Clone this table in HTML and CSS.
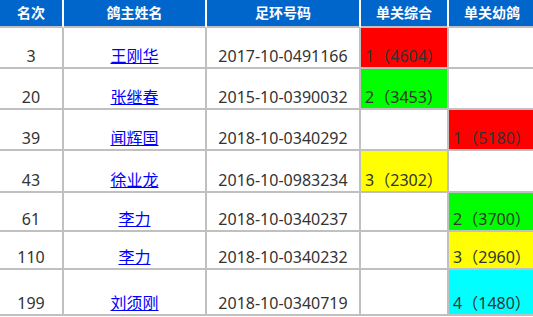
FILE: index.html
```html
<!DOCTYPE html>
<html lang="zh">
<head>
<meta charset="utf-8">
<title>成绩</title>
<link rel="stylesheet" href="styles.css">
</head>
<body>
<table class="rank">
  <colgroup>
    <col class="c-rank"><col class="c-name"><col class="c-ring"><col class="c-a"><col class="c-b">
  </colgroup>
  <thead>
    <tr class="hd"><th>名次</th><th>鸽主姓名</th><th>足环号码</th><th>单关综合</th><th>单关幼鸽</th></tr>
  </thead>
  <tbody>
    <tr class="r41"><td>3</td><td><a href="#">王刚华</a></td><td>2017-10-0491166</td><td class="red">1（4604）</td><td></td></tr>
    <tr class="r41"><td>20</td><td><a href="#">张继春</a></td><td>2015-10-0390032</td><td class="green">2（3453）</td><td></td></tr>
    <tr class="r41"><td>39</td><td><a href="#">闻辉国</a></td><td>2018-10-0340292</td><td></td><td class="red">1（5180）</td></tr>
    <tr class="r42"><td>43</td><td><a href="#">徐业龙</a></td><td>2016-10-0983234</td><td class="yellow">3（2302）</td><td></td></tr>
    <tr class="r39"><td>61</td><td><a href="#">李力</a></td><td>2018-10-0340237</td><td></td><td class="green">2（3700）</td></tr>
    <tr class="r38"><td>110</td><td><a href="#">李力</a></td><td>2018-10-0340232</td><td></td><td class="yellow">3（2960）</td></tr>
    <tr class="r46"><td>199</td><td><a href="#">刘须刚</a></td><td>2018-10-0340719</td><td></td><td class="cyan">4（1480）</td></tr>
  </tbody>
</table>
</body>
</html>
```
FILE: styles.css
```css
html, body {
  margin: 0;
  padding: 0;
  background: #fff;
  overflow: hidden;
}
.rank {
  border-collapse: separate;
  border-spacing: 0;
  table-layout: fixed;
  width: 537px;
  font-family: "Noto Sans", "Noto Sans CJK SC", sans-serif;
  font-size: 16px;
  color: #333;
}
.c-rank { width: 64px; }
.c-name { width: 143px; }
.c-ring { width: 154px; }
.c-a { width: 88px; }
.c-b { width: 88px; }

.rank th, .rank td {
  box-sizing: border-box;
  padding: 0;
  text-align: center;
  border-right: 2px solid #c0c0c0;
  border-bottom: 2px solid #c0c0c0;
}
.rank th {
  background: #0066cc;
  color: #fff;
  font-size: 14px;
  font-weight: bold;
  border-right-color: #fff;
  vertical-align: middle;
  line-height: 20px;
}
.rank td {
  vertical-align: bottom;
  line-height: 20px;
  padding-bottom: 1px;
  white-space: nowrap;
}
.rank a {
  color: #0000ff;
  text-decoration: underline;
}
.hd { height: 28px; }
.r38 { height: 38px; }
.r39 { height: 39px; }
.r41 { height: 41px; }
.r42 { height: 42px; }
.r46 { height: 46px; }

.red { background: #ff0000; }
.green { background: #00ff00; }
.yellow { background: #ffff00; }
.cyan { background: #00ffff; }
```
